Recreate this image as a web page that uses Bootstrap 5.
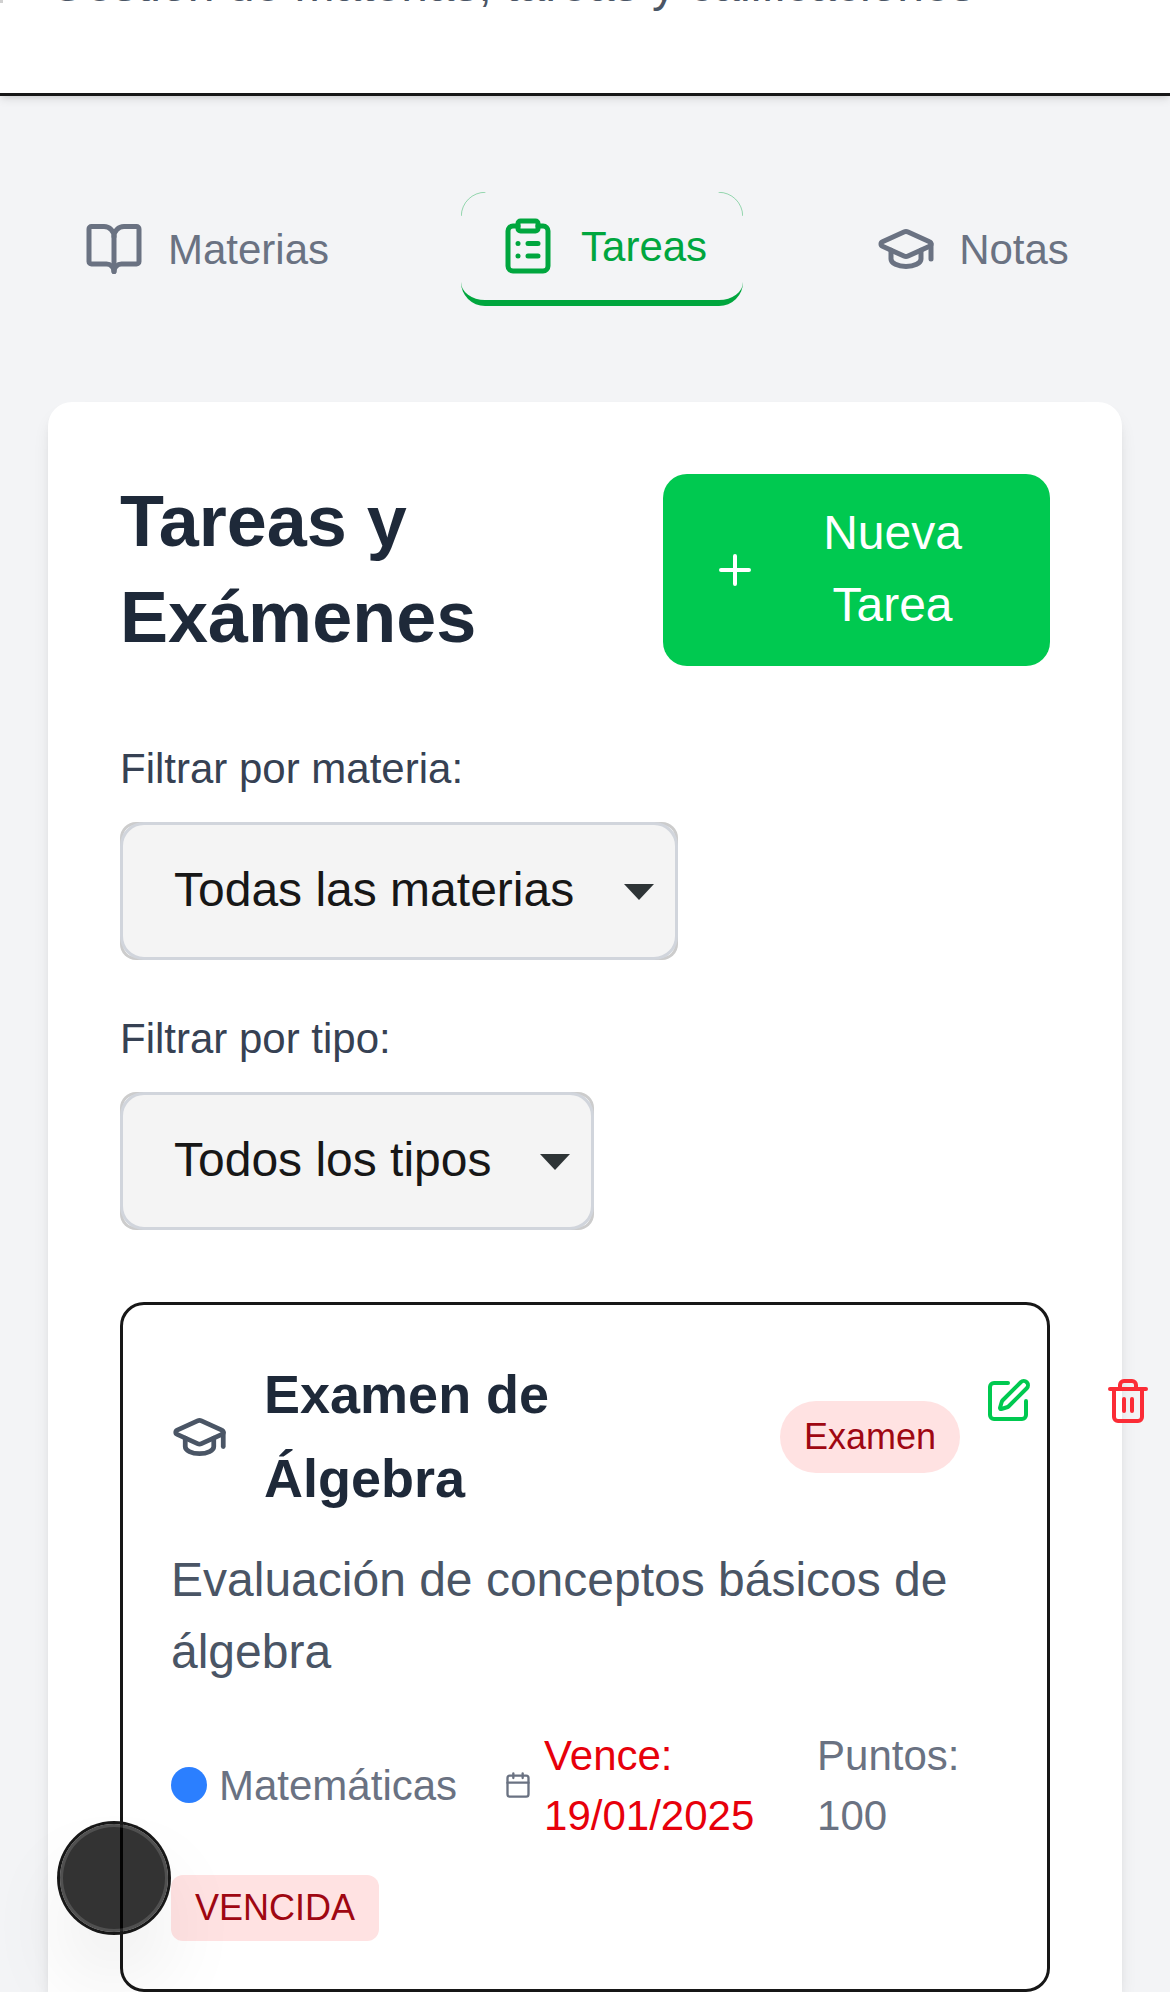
<!DOCTYPE html>
<html lang="es">
<head>
<meta charset="utf-8">
<meta name="viewport" content="width=device-width, initial-scale=1">
<title>Tareas y Exámenes</title>
<link href="https://cdn.jsdelivr.net/npm/bootstrap@5.3.0/dist/css/bootstrap.min.css" rel="stylesheet">
<style>
html, body { height: 1992px; overflow: hidden; }
body { background: #f3f4f6; color: #171717; font-family: "Liberation Sans", Arial, sans-serif; font-size: 48px; line-height: 72px; }
svg { display: block; flex: none; fill: none; stroke: currentColor; stroke-width: 2; stroke-linecap: round; stroke-linejoin: round; }
.app-header { height: 96px; background: #fff; border-bottom: 3px solid #171717; box-shadow: 0 3px 9px rgba(0,0,0,.1), 0 3px 6px -3px rgba(0,0,0,.1); }
.header-clip { height: 93px; }
.header-mark { width: 3px; height: 3px; background: #d0d0d0; margin-right: 46px; }
.header-sub { margin-top: -51px; color: #4a5565; }
.tabs-row { gap: 96px; padding: 96px 0 96px 48px; }
.tab-btn { gap: 24px; padding: 24px 36px; font-size: 42px; line-height: 60px; color: #6a7282; background: none; border: 0 solid; border-radius: 24px; }
.tab-btn.is-active { color: #00a63e; border-width: 0 0 6px; border-color: #00a63e; }
.tab-btn.tab-tight { padding-left: 37px; gap: 23px; }
.tab-arcs { stroke-width: .4; }
.text-drop { margin-top: 1px; margin-bottom: -1px; }
.text-lift { margin-top: -1px; margin-bottom: 1px; }
.ic20 { width: 60px; height: 60px; }
.ic16 { width: 48px; height: 48px; }
.panel { margin: 0 48px; padding: 72px 72px 0; height: 1590px; border: 0; border-radius: 24px 24px 0 0; box-shadow: 0 12px 18px -3px rgba(0,0,0,.1), 0 6px 12px -6px rgba(0,0,0,.1); }
.panel-title { font-size: 72px; line-height: 96px; width: 400px; color: #1e2939; }
.btn-new { width: 387px; padding: 24px 48px; gap: 24px; background: #00c950; color: #fff; font-size: 48px; line-height: 72px; border: 0; border-radius: 24px; }
.filters { padding: 72px 0; gap: 48px; }
.filter-label { font-size: 42px; line-height: 60px; color: #364153; padding-top: 1px; margin-bottom: 23px; }
.select-shell { border-radius: 16px; background: #fff; box-shadow: inset 0 0 0 3px #ccc; }
.select-face { height: 138px; padding: 0 21px 0 51px; border: 3px solid #d1d5dc; border-radius: 24px; background: #f4f4f4; }
.w-materia { width: 558px; }
.w-tipo { width: 474px; }
.caret { flex: none; width: 30px; height: 16px; background: #2e3436; clip-path: polygon(0 0, 100% 0, 50% 100%); margin-top: 2px; }
.task { height: 690px; padding: 48px; border: 3px solid #171717; border-radius: 24px; }
.task-icon { width: 57px; height: 60px; color: #4a5565; }
.task-title { width: 516px; margin-left: 36px; font-size: 54px; line-height: 84px; color: #1e2939; }
.kind { padding: 12px 24px; font-size: 36px; line-height: 48px; color: #9f0712; background: #ffe2e2; }
.act { padding: 24px; background: none; border: 0; }
.act-edit { color: #00c950; margin-right: 24px; }
.act-del { color: #fb2c36; }
.desc { margin: 23px 0 37px; color: #4a5565; }
.meta { font-size: 42px; line-height: 60px; color: #6a7282; }
.subject-dot { width: 36px; height: 36px; background: #2b7fff; margin-right: 12px; }
.cal { width: 28px; height: 28px; margin: 0 12.500px 0 46.500px; }
.due { width: 225px; margin-right: 48px; color: #e7000b; }
.late { padding: 9px 24px; margin-top: 30px; font-size: 36px; line-height: 48px; color: #9f0712; background: #ffe2e2; border-radius: 12px; }
.dev-dot { left: 60px; top: 1824px; width: 108px; height: 108px; background: rgba(0,0,0,.8); box-shadow: 0 0 0 3px #171717, inset 0 0 0 3px rgba(255,255,255,.14), 0 48px 96px -24px rgba(0,0,0,.24); }
</style>
</head>
<body>
<header class="app-header position-relative">
  <div class="header-clip d-flex align-items-start overflow-hidden">
    <span class="header-mark"></span>
    <p class="header-sub mb-0 text-nowrap">Gestión de materias, tareas y calificaciones</p>
  </div>
</header>

<nav class="tabs-row d-flex align-items-center">
  <button class="tab-btn d-flex align-items-center">
    <svg class="ic20" viewBox="0 0 24 24"><path d="M12 7v14"/><path d="M3 18a1 1 0 0 1-1-1V4a1 1 0 0 1 1-1h5a4 4 0 0 1 4 4 4 4 0 0 1 4-4h5a1 1 0 0 1 1 1v13a1 1 0 0 1-1 1h-6a3 3 0 0 0-3 3 3 3 0 0 0-3-3z"/></svg>
    <span class="text-drop">Materias</span>
  </button>
  <button class="tab-btn tab-tight is-active position-relative d-flex align-items-center">
    <svg class="tab-arcs position-absolute top-0 start-0" width="282" height="24" viewBox="0 0 282 24"><path d="M.3 23.500A23.500 23.500 0 0 1 24 .3M258 .3A23.500 23.500 0 0 1 281.700 23.500"/></svg>
    <svg class="ic20" viewBox="0 0 24 24"><rect width="8" height="4" x="8" y="2" rx="1"/><path d="M16 4h2a2 2 0 0 1 2 2v14a2 2 0 0 1-2 2H6a2 2 0 0 1-2-2V6a2 2 0 0 1 2-2h2"/><path d="M12 11h4M12 16h4M8 11h.01M8 16h.01"/></svg>
    <span class="text-drop">Tareas</span>
  </button>
  <button class="tab-btn tab-tight d-flex align-items-center">
    <svg class="ic20" viewBox="0 0 24 24"><path d="M21.42 10.922a1 1 0 0 0-.019-1.838L12.83 5.18a2 2 0 0 0-1.66 0L2.6 9.08a1 1 0 0 0 0 1.832l8.57 3.908a2 2 0 0 0 1.66 0z"/><path d="M22 10v6"/><path d="M6 12.5V16a6 3 0 0 0 12 0v-3.5"/></svg>
    <span class="text-drop">Notas</span>
  </button>
</nav>

<main class="panel card">
  <div class="d-flex justify-content-between align-items-center">
    <h2 class="panel-title text-lift fw-bold">Tareas y Exámenes</h2>
    <button class="btn-new d-flex align-items-center">
      <svg class="ic16" viewBox="0 0 24 24"><path d="M5 12h14M12 5v14"/></svg>
      <span class="text-lift flex-grow-1 text-center">Nueva Tarea</span>
    </button>
  </div>

  <div class="filters d-flex flex-column">
    <div>
      <div class="filter-label">Filtrar por materia:</div>
      <div class="select-shell w-materia"><div class="select-face d-flex align-items-center justify-content-between"><span class="text-lift">Todas las materias</span><i class="caret"></i></div></div>
    </div>
    <div>
      <div class="filter-label">Filtrar por tipo:</div>
      <div class="select-shell w-tipo"><div class="select-face d-flex align-items-center justify-content-between"><span class="text-lift">Todos los tipos</span><i class="caret"></i></div></div>
    </div>
  </div>

  <article class="task">
    <div class="d-flex align-items-start">
      <div class="d-flex align-items-center flex-shrink-0">
        <svg class="task-icon" viewBox="0 0 24 24"><path d="M21.42 10.922a1 1 0 0 0-.019-1.838L12.83 5.18a2 2 0 0 0-1.66 0L2.6 9.08a1 1 0 0 0 0 1.832l8.57 3.908a2 2 0 0 0 1.66 0z"/><path d="M22 10v6"/><path d="M6 12.5V16a6 3 0 0 0 12 0v-3.5"/></svg>
        <h3 class="task-title text-lift fw-bold">Examen de<br>Álgebra</h3>
        <span class="kind rounded-pill">Examen</span>
      </div>
      <button class="act act-edit"><svg class="ic16" viewBox="0 0 24 24"><path d="M12 3H5a2 2 0 0 0-2 2v14a2 2 0 0 0 2 2h14a2 2 0 0 0 2-2v-7"/><path d="M18.375 2.625a1 1 0 0 1 3 3l-9.013 9.014a2 2 0 0 1-.853.505l-2.873.84a.5.5 0 0 1-.62-.62l.84-2.873a2 2 0 0 1 .506-.852z"/></svg></button>
      <button class="act act-del"><svg class="ic16" viewBox="0 0 24 24"><path d="M3 6h18M19 6v14a2 2 0 0 1-2 2H7a2 2 0 0 1-2-2V6M8 6V4a2 2 0 0 1 2-2h4a2 2 0 0 1 2 2v2M10 11v6M14 11v6"/></svg></button>
    </div>
    <p class="desc">Evaluación de conceptos básicos de álgebra</p>
    <div class="meta d-flex align-items-center">
      <span class="subject-dot rounded-circle"></span>
      <span class="text-drop">Matemáticas</span>
      <svg class="cal" viewBox="0 0 24 24"><path d="M8 2v4M16 2v4M3 10h18"/><rect width="18" height="18" x="3" y="4" rx="2"/></svg>
      <span class="due text-drop">Vence:<br>19/01/2025</span>
      <span class="text-drop">Puntos:<br>100</span>
    </div>
    <div class="d-flex"><span class="late">VENCIDA</span></div>
  </article>
</main>

<div class="dev-dot position-fixed rounded-circle"></div>
<script src="https://cdn.jsdelivr.net/npm/bootstrap@5.3.0/dist/js/bootstrap.bundle.min.js"></script>
</body>
</html>
